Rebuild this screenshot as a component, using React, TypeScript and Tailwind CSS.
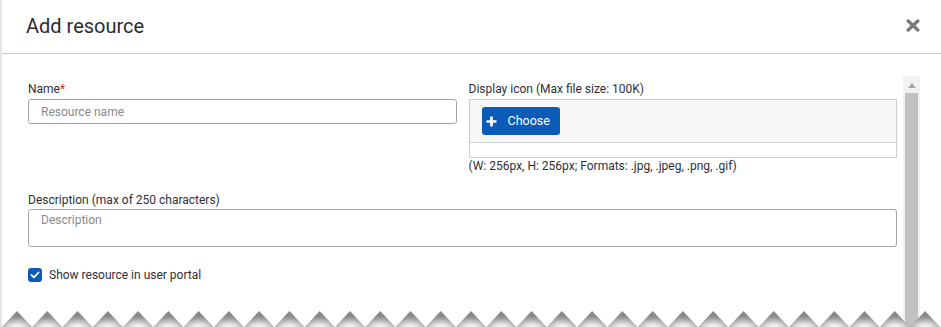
import React from "react";

function Zigzag() {
  const period = 30.27;
  const half = 15;
  const h = 16;
  const polys: string[] = [];
  for (let i = -1; i < 33; i++) {
    const px = 15 + period * i;
    polys.push(`${px - half},${h} ${px},0 ${px + half},${h}`);
  }
  return (
    <svg
      className="absolute left-0 bottom-0"
      width={941}
      height={h}
      viewBox={`0 0 941 ${h}`}
    >
      <defs>
        <radialGradient id="zz" cx="0.5" cy="1.05" r="0.75" fx="0.5" fy="1.05">
          <stop offset="0" stopColor="#ffffff" />
          <stop offset="0.35" stopColor="#dedede" />
          <stop offset="0.75" stopColor="#a2a2a2" />
          <stop offset="1" stopColor="#888888" />
        </radialGradient>
      </defs>
      {polys.map((p, i) => (
        <polygon key={i} points={p} fill="url(#zz)" />
      ))}
    </svg>
  );
}

export default function App() {
  return (
    <div
      className="relative w-[941px] h-[327px] overflow-hidden bg-white border-l-2 border-[#e6e6e6] text-[#2f2f38]"
      style={{ fontFamily: "Roboto, 'Noto Sans', sans-serif" }}
    >
      <div className="h-[54px] flex items-center justify-between pl-[24px] pr-[21px] border-b border-[#c9c9cc]">
        <h1 className="text-[20px] leading-[24px] font-normal text-[#2b2b33] -mt-[1px]">
          Add resource
        </h1>
        <svg width="14" height="13" viewBox="0 0 14 13" className="-mt-[2px]">
          <path
            d="M2.2 2 L11.8 11 M11.8 2 L2.2 11"
            stroke="#7a7a7a"
            strokeWidth="3.4"
            strokeLinecap="round"
          />
        </svg>
      </div>

      <div className="flex">
        <div className="flex-1 pl-[26px] pr-[6px] pt-[28px]">
          <div className="grid grid-cols-2 gap-x-[12px]">
            <div>
              <label className="block text-[12px] leading-[14px] mb-[3px]">
                Name<span className="text-[#e0282e]">*</span>
              </label>
              <div className="h-[25px] border border-[#a4a4a8] rounded-[3px] flex items-center pl-[12px] text-[12px] text-[#8a8a90]">
                Resource name
              </div>
            </div>
            <div>
              <label className="block text-[12px] leading-[14px] mb-[3px]">
                Display icon (Max file size: 100K)
              </label>
              <div className="border border-[#cfcfcf]">
                <div className="h-[43px] bg-[#f7f7f7] border-b border-[#cfcfcf] pt-[7px] pl-[12px]">
                  <div className="inline-flex items-center h-[28px] pl-[4px] pr-[10px] gap-[11px] bg-[#0b5bb8] rounded-[3px] text-white text-[12.5px]">
                    <svg width="11" height="11" viewBox="0 0 11 11">
                      <path d="M5.5 0.5 V10.5 M0.5 5.5 H10.5" stroke="#fff" strokeWidth="2.6" />
                    </svg>
                    <span>Choose</span>
                  </div>
                </div>
                <div className="h-[14px] bg-white" />
              </div>
              <div className="text-[12px] leading-[14px] mt-[1px]">
                (W: 256px, H: 256px; Formats: .jpg, .jpeg, .png, .gif)
              </div>
            </div>
          </div>

          <div className="mt-[20px]">
            <label className="block text-[12px] leading-[14px] mb-[2px]">
              Description (max of 250 characters)
            </label>
            <div className="h-[38px] border border-[#a4a4a8] rounded-[3px] pl-[12px] pt-[3px] text-[12px] leading-[14px] text-[#8a8a90]">
              Description
            </div>
          </div>

          <div className="mt-[21px] flex items-center gap-[7px]">
            <div className="w-[14px] h-[14px] rounded-[3px] bg-[#0b5bb8] flex items-center justify-center">
              <svg width="10" height="8" viewBox="0 0 10 8">
                <path d="M1.5 4 L4 6.3 L8.5 1.5" stroke="#fff" strokeWidth="1.8" fill="none" strokeLinecap="round" strokeLinejoin="round" />
              </svg>
            </div>
            <span className="text-[12px] leading-[14px]">Show resource in user portal</span>
          </div>
        </div>

        <div className="w-[17px] mt-[22px] h-[260px] bg-[#f1f1f1] flex flex-col items-center">
          <svg width="8" height="5" viewBox="0 0 8 5" className="mt-[7px]">
            <path d="M0 5 L4 0 L8 5 Z" fill="#a3a3a3" />
          </svg>
          <div className="mt-[5px] w-[13px] flex-1 bg-[#c1c1c1]" />
        </div>
        <div className="w-[21px]" />
      </div>

      <Zigzag />
    </div>
  );
}
